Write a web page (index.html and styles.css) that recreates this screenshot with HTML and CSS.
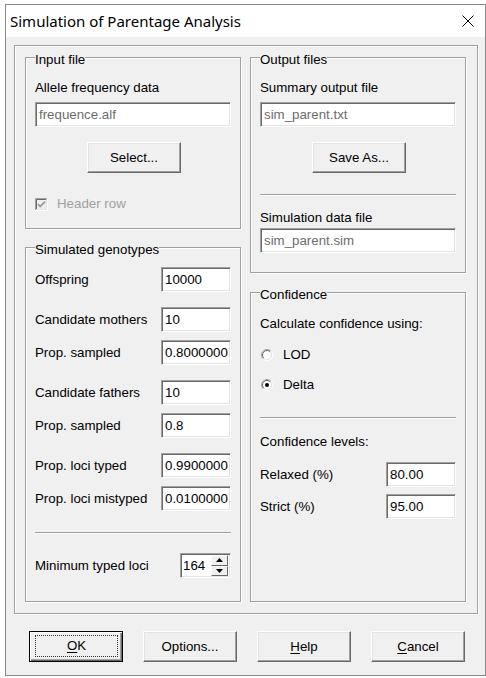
FILE: index.html
```html
<!DOCTYPE html>
<html lang="en">
<head>
<meta charset="utf-8">
<title>Simulation of Parentage Analysis</title>
<link rel="stylesheet" href="styles.css">
</head>
<body>
<div class="window">
  <div class="titlebar">
    <span class="title">Simulation of Parentage Analysis</span>
    <span class="close"><svg width="12" height="12" viewBox="0 0 12 12"><path d="M0.5 0.5L11.5 11.5M11.5 0.5L0.5 11.5" stroke="#000" stroke-width="1" fill="none"/></svg></span>
  </div>
  <div class="client">
    <div class="frame">
      <div class="col">
        <fieldset class="group">
          <legend>Input file</legend>
          <div class="label">Allele frequency data</div>
          <div class="field file">frequence.alf</div>
          <div class="btn browse">Select...</div>
          <div class="check">
            <svg width="13" height="13" viewBox="0 0 13 13">
              <rect x="2" y="2" width="9" height="9" fill="#f0f0f0"/>
              <path d="M0.5 12V0.5H12" stroke="#a0a0a0" fill="none"/>
              <path d="M1.5 11V1.5H11" stroke="#696969" fill="none"/>
              <path d="M0 12.5H12.5V0" stroke="#fff" fill="none"/>
              <path d="M1 11.5H11.5V1" stroke="#e3e3e3" fill="none"/>
              <path d="M3 6.2L5.2 8.5L10 3.7" stroke="#9a9a9a" stroke-width="1.8" fill="none"/>
            </svg>
            <span>Header row</span>
          </div>
        </fieldset>
        <fieldset class="group sim">
          <legend>Simulated genotypes</legend>
          <div class="row first"><span>Offspring</span><span class="field num">10000</span></div>
          <div class="row spaced"><span>Candidate mothers</span><span class="field num">10</span></div>
          <div class="row"><span>Prop. sampled</span><span class="field num">0.8000000</span></div>
          <div class="row spaced"><span>Candidate fathers</span><span class="field num">10</span></div>
          <div class="row"><span>Prop. sampled</span><span class="field num">0.8</span></div>
          <div class="row spaced"><span>Prop. loci typed</span><span class="field num">0.9900000</span></div>
          <div class="row"><span>Prop. loci mistyped</span><span class="field num">0.0100000</span></div>
          <div class="sep sep-sim"></div>
          <div class="row spin-row"><span>Minimum typed loci</span>
            <span class="field spin">
              <span class="spin-val">164</span>
              <span class="spin-btns">
                <span class="spin-btn"><svg width="7" height="4" viewBox="0 0 7 4"><path d="M0 4H7L3.5 0Z" fill="#000"/></svg></span>
                <span class="spin-btn"><svg width="7" height="4" viewBox="0 0 7 4"><path d="M0 0H7L3.5 4Z" fill="#000"/></svg></span>
              </span>
            </span>
          </div>
        </fieldset>
      </div>
      <div class="col">
        <fieldset class="group output">
          <legend>Output files</legend>
          <div class="label">Summary output file</div>
          <div class="field file">sim_parent.txt</div>
          <div class="btn browse">Save As...</div>
          <div class="sep sep-out"></div>
          <div class="label label-tight">Simulation data file</div>
          <div class="field file field-tight">sim_parent.sim</div>
        </fieldset>
        <fieldset class="group confidence">
          <legend>Confidence</legend>
          <div class="label label-conf">Calculate confidence using:</div>
          <div class="radio radio-first">
            <svg width="12" height="12" viewBox="0 0 12 12">
              <circle cx="6" cy="6" r="4.5" fill="#fff"/>
              <path d="M9.9 2.1A5.5 5.5 0 0 0 2.1 9.9" stroke="#a0a0a0" fill="none"/>
              <path d="M9.2 2.8A4.5 4.5 0 0 0 2.8 9.2" stroke="#696969" fill="none"/>
              <path d="M9.9 2.1A5.5 5.5 0 0 1 2.1 9.9" stroke="#fff" fill="none"/>
              <path d="M9.2 2.8A4.5 4.5 0 0 1 2.8 9.2" stroke="#e3e3e3" fill="none"/>
            </svg>
            <span>LOD</span>
          </div>
          <div class="radio">
            <svg width="12" height="12" viewBox="0 0 12 12">
              <circle cx="6" cy="6" r="4.5" fill="#fff"/>
              <path d="M9.9 2.1A5.5 5.5 0 0 0 2.1 9.9" stroke="#a0a0a0" fill="none"/>
              <path d="M9.2 2.8A4.5 4.5 0 0 0 2.8 9.2" stroke="#696969" fill="none"/>
              <path d="M9.9 2.1A5.5 5.5 0 0 1 2.1 9.9" stroke="#fff" fill="none"/>
              <path d="M9.2 2.8A4.5 4.5 0 0 1 2.8 9.2" stroke="#e3e3e3" fill="none"/>
              <circle cx="6" cy="6" r="2" fill="#000"/>
            </svg>
            <span>Delta</span>
          </div>
          <div class="sep sep-conf"></div>
          <div class="label label-levels">Confidence levels:</div>
          <div class="row levels-first"><span>Relaxed (%)</span><span class="field num">80.00</span></div>
          <div class="row"><span>Strict (%)</span><span class="field num">95.00</span></div>
        </fieldset>
      </div>
    </div>
    <div class="actions">
      <div class="btn default"><span class="focus"><u>O</u>K</span></div>
      <div class="btn">Options...</div>
      <div class="btn"><u>H</u>elp</div>
      <div class="btn"><u>C</u>ancel</div>
    </div>
  </div>
</div>
</body>
</html>
```

FILE: styles.css
```css
* { box-sizing: border-box; }
html, body { margin: 0; padding: 0; background: #fff; }
body {
  font-family: "Liberation Sans", Arial, sans-serif;
  font-size: 13.3px;
  line-height: 16px;
  color: #000;
}
.window {
  margin: 4px 0 0 5px;
  width: 481px;
  height: 672px;
  border: 1px solid #888;
  background: #f0f0f0;
  display: flex;
  flex-direction: column;
}
.titlebar {
  height: 32px;
  flex: none;
  background: #fff;
  display: flex;
  align-items: center;
  justify-content: space-between;
  padding-left: 4px;
}
.title {
  font-family: "Noto Sans", "Open Sans", sans-serif;
  font-size: 15px;
  line-height: 32px;
  color: #000;
}
.close {
  width: 34px;
  height: 32px;
  display: flex;
  align-items: center;
  justify-content: center;
}
.close svg { display: block; }
.client {
  flex: 1;
  padding: 8px 0 0 8px;
}
.frame {
  width: 464px;
  border: 1px solid #a0a0a0;
  box-shadow: inset 1px 1px #fff, 1px 1px #fff;
  padding: 0 11px 11px 10px;
  display: flex;
  gap: 9px;
}
.col {
  width: 216px;
  flex: none;
  display: flex;
  flex-direction: column;
}
.group {
  margin: 0;
  padding: 0 9px 16px;
  min-width: 0;
  border: 1px solid #a0a0a0;
  box-shadow: inset 1px 1px #fff, 1px 1px #fff;
}
.group legend {
  padding: 6px 0 0;
  line-height: 16px;
  background: #f0f0f0;
  background-clip: content-box;
}
.sim { margin-top: 7px; padding-bottom: 23px; }
.output { padding-bottom: 19px; }
.confidence { margin-top: 8px; flex: 1; }

.label { margin-top: 12px; height: 16px; white-space: nowrap; }
.label-tight { margin-top: 14px; }
.label-conf { margin-top: 13px; }
.label-levels { margin-top: 15px; }

.field {
  display: block;
  height: 25px;
  background: #fff;
  border: 1px solid;
  border-color: #a0a0a0 #fff #fff #a0a0a0;
  box-shadow: inset 1px 1px #696969, inset -1px -1px #e3e3e3;
  padding: 0 3px;
  line-height: 23px;
  white-space: nowrap;
  overflow: hidden;
}
.file { margin-top: 6px; color: #6d6d6d; }
.field-tight { margin-top: 2px; }
.num { width: 70px; }

.btn {
  display: flex;
  align-items: center;
  justify-content: center;
  width: 94px;
  height: 31px;
  background: #f0f0f0;
  border: 1px solid;
  border-color: #fff #696969 #696969 #fff;
  box-shadow: inset -1px -1px #a0a0a0, inset 1px 1px #e3e3e3;
  white-space: nowrap;
}
.browse { margin: 15px 0 0 52px; }

.check {
  display: flex;
  align-items: center;
  gap: 9px;
  height: 16px;
  margin-top: 23px;
  color: #a0a0a0;
}
.check svg, .radio svg { display: block; flex: none; }

.row {
  display: flex;
  align-items: center;
  justify-content: space-between;
  height: 25px;
  margin-top: 8px;
  white-space: nowrap;
}
.row.first { margin-top: 9px; }
.row.spaced { margin-top: 15px; }
.levels-first { margin-top: 12px; }
.row.levels-first + .row { margin-top: 7px; }

.sep {
  height: 2px;
  border-top: 1px solid #a0a0a0;
  border-bottom: 1px solid #fff;
}
.sep-sim { margin-top: 21px; }
.sep-out { margin-top: 21px; }
.sep-conf { margin-top: 24px; }
.spin-row { margin-top: 19px; }

.spin {
  width: 51px;
  display: flex;
  padding: 1px 2px 1px 0;
}
.spin-val { flex: 1; padding-left: 2px; line-height: 21px; }
.spin-btns {
  width: 17px;
  display: flex;
  flex-direction: column;
}
.spin-btn {
  flex: 1;
  display: flex;
  align-items: center;
  justify-content: center;
  background: #f0f0f0;
  border: 1px solid;
  border-color: #fff #696969 #696969 #fff;
}
.spin-btn svg { display: block; }

.radio {
  display: flex;
  align-items: center;
  gap: 10px;
  height: 16px;
  margin-top: 14px;
  padding-left: 1px;
}
.radio-first { margin-top: 15px; }

.actions {
  display: flex;
  justify-content: space-between;
  margin-top: 17px;
  padding: 0 20px 0 15px;
}
.default {
  border: 1px solid #000;
  box-shadow: inset 1px 1px #fff, inset -1px -1px #696969, inset -2px -2px #a0a0a0;
  padding: 3px 4px 4px 5px;
  align-items: stretch;
}
.focus {
  flex: 1;
  display: flex;
  align-items: center;
  justify-content: center;
  border: 1px dotted #333;
}
u { text-decoration-thickness: 1px; text-underline-offset: 2px; }
```
